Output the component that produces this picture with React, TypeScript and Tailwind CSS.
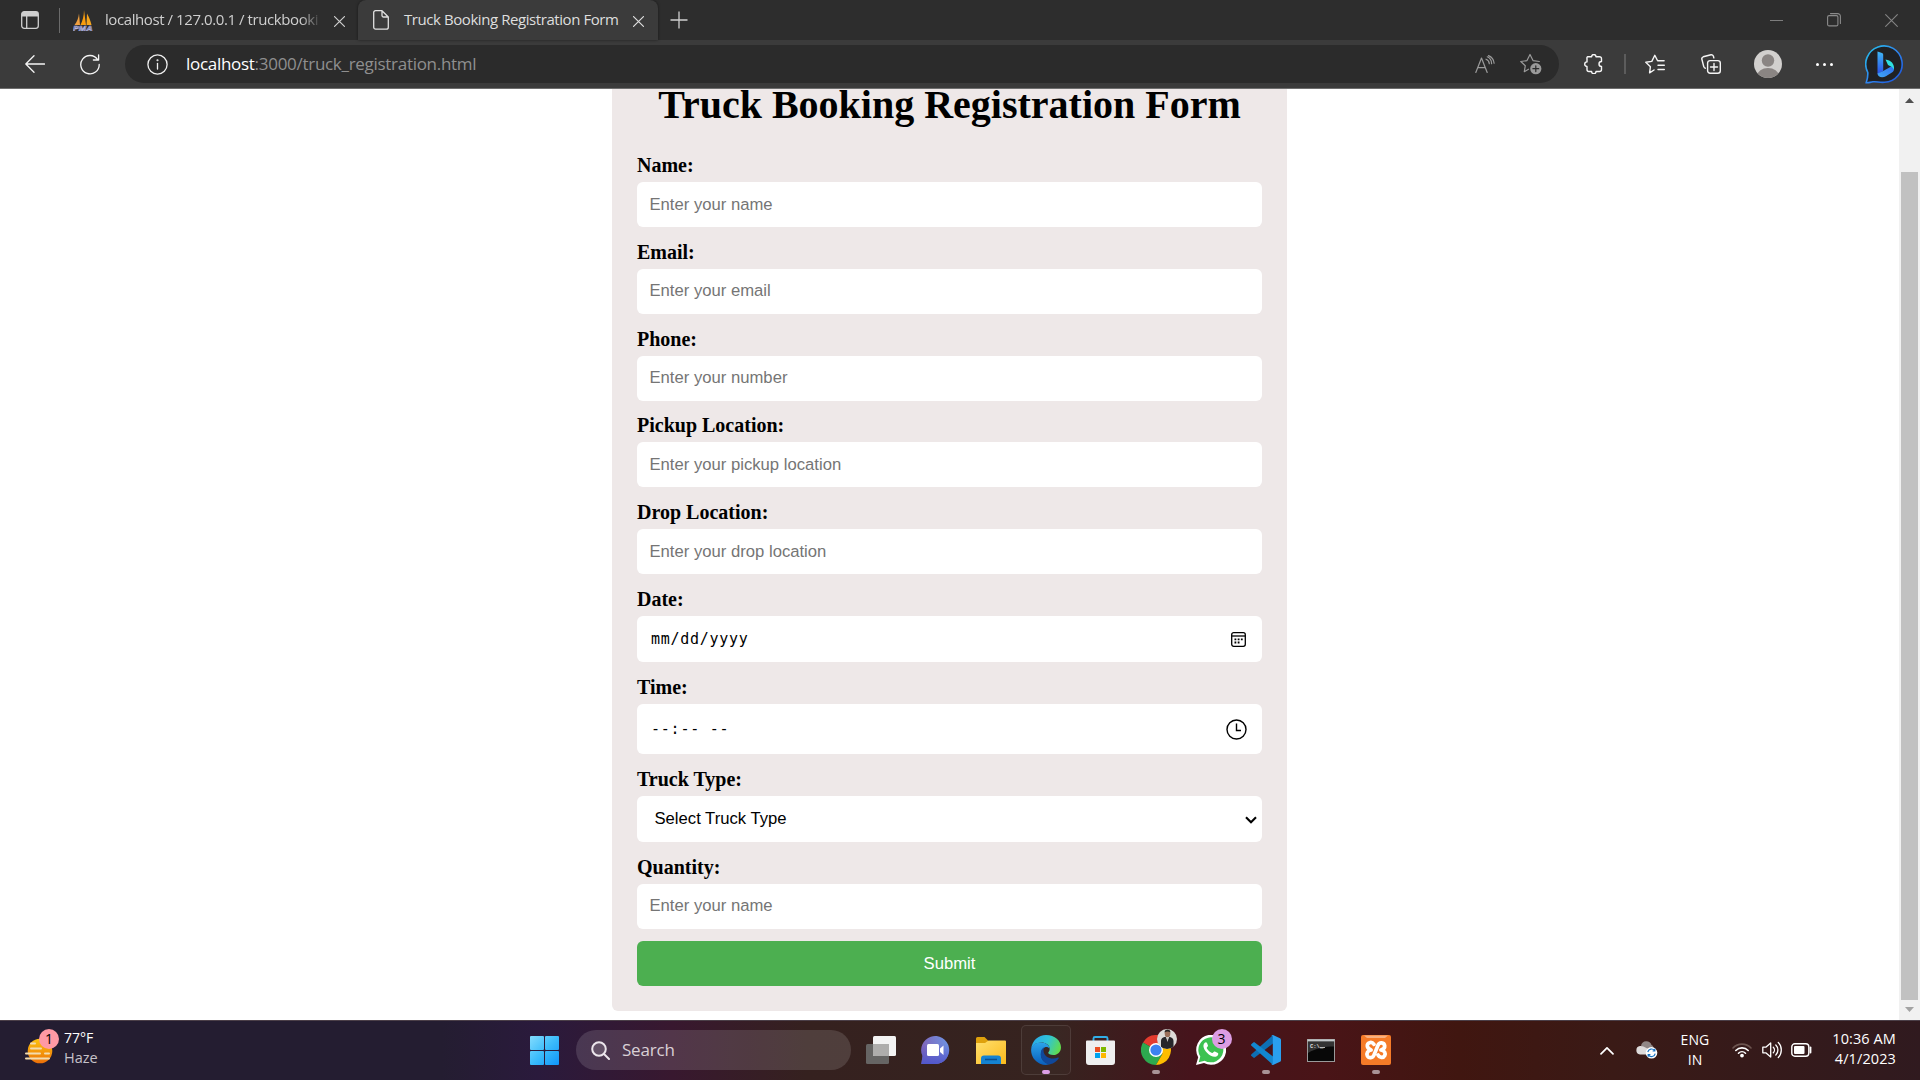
import React from "react";

const stroke = { fill: "none", strokeLinecap: "round" as const, strokeLinejoin: "round" as const };

function CloseIcon({ size, color, width }: { size: number; color: string; width: number }) {
  return (
    <svg width={size} height={size} viewBox="0 0 12 12" {...stroke} stroke={color} strokeWidth={width}>
      <path d="M.6.6l10.8 10.8M11.4.6L.6 11.4" />
    </svg>
  );
}

function TabStrip() {
  return (
    <div className="flex h-10 w-full items-center bg-[#2d2d2d] text-[#cfcfcf]">
      <div className="flex w-[59px] justify-center">
        <svg width="18" height="18" viewBox="0 0 18 18" fill="none">
          <rect x="0.7" y="0.7" width="16.6" height="16.6" rx="2.5" stroke="#cfcfcf" strokeWidth="1.3" />
          <path d="M.7 5.5V3A2.3 2.3 0 0 1 3 .7h12A2.3 2.3 0 0 1 17.300 3v2.500z" fill="#cfcfcf" />
          <path d="M5.700 5v12.500" stroke="#cfcfcf" strokeWidth="1.300" />
        </svg>
      </div>
      <div className="h-[25px] w-px bg-[#6b6b6b]" />
      <div className="flex w-[298px] items-center pl-[13px]">
        <svg width="20" height="21" viewBox="0 0 20 21" className="shrink-0">
          <path d="M1.500 15C4 12 5.500 8 6 3.500L7 15z" fill="#f0a040" />
          <path d="M7.500 15C9.500 11 11 6 11 0l2 15z" fill="#f89c0e" />
          <path d="M13.500 15L14 3.500C16 7 17.500 11 18.500 15z" fill="#f6a51c" />
          <text x="0" y="20.500" fontFamily="Liberation Sans" fontWeight="700" fontStyle="italic" fontSize="8" textLength="19.500" lengthAdjust="spacingAndGlyphs" stroke="#b4b6dc" strokeWidth=".6" fill="#3c3f86">PMA</text>
        </svg>
        <div className="-mt-0.5 ml-3 w-[217px] overflow-hidden text-[15px] leading-5 tracking-[-0.42px] whitespace-nowrap [mask-image:linear-gradient(to_right,black_90%,transparent)]">
          localhost / 127.0.0.1 / truckbooki
        </div>
        <div className="ml-3 mt-0.5 flex">
          <CloseIcon size={11} color="#cfcfcf" width={1.3} />
        </div>
      </div>
      <div className="relative flex h-full w-[300px] items-center rounded-t-[8px] bg-[#3b3b3b] pl-[15px] text-[#dedede] shadow-[0_0_3px_rgba(0,0,0,0.5)]">
        <svg width="16" height="20" viewBox="0 0 16 20" {...stroke} stroke="#e0e0e0" strokeWidth="1.300" className="shrink-0">
          <path d="M2.500.7H9l6.300 6.300v10.200a2 2 0 0 1-2 2H2.700a2 2 0 0 1-2-2V2.500A1.800 1.800 0 0 1 2.500.7zM9 .9V5.500A1.500 1.500 0 0 0 10.500 7h4.600" />
        </svg>
        <div className="-mt-0.5 ml-[15px] w-[214px] text-[15px] leading-5 tracking-[-0.43px] whitespace-nowrap">
          Truck Booking Registration Form
        </div>
        <div className="ml-[15px] mt-0.5 flex">
          <CloseIcon size={11} color="#dedede" width={1.3} />
        </div>
      </div>
      <div className="flex w-[42px] justify-center">
        <svg width="18" height="18" viewBox="0 0 18 18" stroke="#cfcfcf" strokeWidth="1.300">
          <path d="M9 .5v17M.5 9h17" />
        </svg>
      </div>
      <div className="ml-auto flex items-center">
        <div className="flex w-14 justify-center">
          <div className="mr-1 h-px w-[13px] bg-[#7d7d7d]" />
        </div>
        <div className="flex w-14 justify-center">
          <svg width="14" height="14" viewBox="0 0 14 14" {...stroke} stroke="#8a8a8a" strokeWidth="1.100">
            <rect x=".6" y="2.600" width="10.300" height="10.300" rx="1.500" />
            <path d="M3.500.6h7A2.800 2.800 0 0 1 13.400 3.500v7" />
          </svg>
        </div>
        <div className="flex w-[58px] justify-center">
          <CloseIcon size={13} color="#858585" width={1} />
        </div>
      </div>
    </div>
  );
}

function Toolbar() {
  return (
    <div className="flex h-12 w-full items-center bg-[#3b3b3b]">
      <div className="flex w-[70px] justify-center">
        <svg width="20" height="18" viewBox="0 0 20 18" {...stroke} stroke="#f5f5f5" strokeWidth="1.300">
          <path d="M19.500 9H.8M9 .8L.8 9 9 17.200" />
        </svg>
      </div>
      <div className="flex w-10 justify-center">
        <svg width="20" height="21" viewBox="0 0 20 21" {...stroke} stroke="#f5f5f5" strokeWidth="1.300">
          <path d="M17.600 5.500A9.200 9.200 0 1 0 19.200 10.500M18.600.8v5.200h-5.200" />
        </svg>
      </div>
      <div className="ml-[15px] flex h-[38px] w-[1434px] items-center rounded-full bg-[#2b2b2b] pl-[22px]">
        <svg width="21" height="21" viewBox="0 0 21 21" {...stroke} stroke="#f0f0f0" strokeWidth="1.300">
          <circle cx="10.500" cy="10.500" r="9.600" />
          <path d="M10.500 9.500v5.500" />
          <circle cx="10.500" cy="6.300" r=".4" fill="#f0f0f0" />
        </svg>
        <div className="ml-[18px] text-[17px] leading-6 tracking-[-0.29px] text-[#8f8f8f]">
          <span className="text-white">localhost</span>:3000/truck_registration.html
        </div>
        <svg width="20" height="19" viewBox="0 0 20 19" {...stroke} stroke="#9a9a9a" strokeWidth="1.200" className="ml-auto">
          <path d="M.8 17.500L6.500 3l5.700 14.500M2.800 12.700h7.500M11 4.200a5 5 0 0 1 3.300 4.500M12.300 1.800a7.500 7.500 0 0 1 4.300 6.900M13.500.600a9 9 0 0 1 5.600 7.600" />
        </svg>
        <svg width="22" height="22" viewBox="0 0 22 22" {...stroke} stroke="#9a9a9a" strokeWidth="1.200" className="mr-[17px] ml-[25px]">
          <path d="M8.500 16.200L4.300 18.700 5.300 12.700.8 8.500l6.200-.9L10 1.500l3 6.100 6.300.900" />
          <circle cx="15.800" cy="15.700" r="5.600" fill="#9a9a9a" stroke="none" />
          <path d="M15.800 12.800v5.800M12.900 15.700h5.800" stroke="#2b2b2b" />
        </svg>
      </div>
      <div className="flex w-[65px] justify-center pl-1">
        <svg width="19" height="20" viewBox="0 0 19 20" {...stroke} stroke="#f5f5f5" strokeWidth="1.400">
          <path d="M3.500 2.700H7.600A2.200 2.200 0 0 1 12 2.700h3.500a2 2 0 0 1 2 2v2.800a2.300 2.300 0 0 0 0 5v3a2 2 0 0 1-2 2H12a2.200 2.200 0 0 1-4.400 0H5a2 2 0 0 1-2-2v-3a2.300 2.300 0 0 1 0-4.600V4.700a2 2 0 0 1 .5-2z" />
        </svg>
      </div>
      <div className="h-5 w-0.5 bg-[#5c5c5c]" />
      <div className="flex w-[58px] justify-center">
        <svg width="20" height="20" viewBox="0 0 20 20" {...stroke} stroke="#f5f5f5" strokeWidth="1.400">
          <path d="M9 16L4.600 18.800 5.400 12.700.8 8.300l6-.9L9.800 1.300l2.800 5.500h6.500M13 11.300h6.300M13 15.500h6.300" />
        </svg>
      </div>
      <div className="flex w-[53px] justify-center">
        <svg width="20" height="20" viewBox="0 0 20 20" {...stroke} stroke="#f5f5f5" strokeWidth="1.400">
          <path d="M4.300 14.200a2 2 0 0 1-1.500-1.500L.8 5A2 2 0 0 1 2.200 2.800L10 .8a2 2 0 0 1 2.400 1.500l.4 1.500" />
          <rect x="6.600" y="6.600" width="12.700" height="12.700" rx="2.500" />
          <path d="M13 9.500v7M9.500 13h7" />
        </svg>
      </div>
      <div className="flex w-[61px] justify-center">
        <svg width="28" height="28" viewBox="0 0 28 28">
          <defs>
            <clipPath id="avatarClip"><circle cx="14" cy="14" r="14" /></clipPath>
          </defs>
          <g clipPath="url(#avatarClip)">
            <rect width="28" height="28" fill="#d2d0ce" />
            <circle cx="14" cy="10.500" r="6.200" fill="#8a8583" />
            <ellipse cx="14" cy="25.500" rx="10.700" ry="7.500" fill="#8a8583" />
          </g>
        </svg>
      </div>
      <div className="flex w-[53px] justify-center gap-1">
        <div className="size-[3px] rounded-full bg-white" />
        <div className="size-[3px] rounded-full bg-white" />
        <div className="size-[3px] rounded-full bg-white" />
      </div>
      <svg width="39" height="39" viewBox="0 0 39 39" className="ml-[14px]">
        <defs>
          <linearGradient id="bingRing" x1="0" y1="0" x2="1" y2="1">
            <stop offset="0" stopColor="#25c4e8" />
            <stop offset=".5" stopColor="#2f86f0" />
            <stop offset="1" stopColor="#1a4fd8" />
          </linearGradient>
          <linearGradient id="bingStem" x1="0" y1="0" x2="0" y2="1">
            <stop offset="0" stopColor="#3fb8f5" />
            <stop offset="1" stopColor="#2b50e8" />
          </linearGradient>
          <linearGradient id="bingFoot" x1="0" y1="1" x2="1" y2="0">
            <stop offset="0" stopColor="#40a8f5" />
            <stop offset="1" stopColor="#2f6cf0" />
          </linearGradient>
        </defs>
        <path d="M1.200 37.700C2.600 34 3 31.500 2.800 27.500A18.200 18.200 0 1 1 19.500 37.300C14 37.800 12 36.200 8 36.800 5 37.200 3 38.200 1.200 37.700z" fill="#202124" stroke="url(#bingRing)" strokeWidth="1.600" />
        <path d="M12.500 6.500l4.500 1.600c.8.300 1.200 1 1.200 1.800v16l-5.700 3z" fill="url(#bingStem)" />
        <path d="M12.500 28.500l5.700-2.500 9.700-5.600c1.800 2.500 1.500 5.600-1 7.200l-6 3.700c-4 2.300-8.400.5-8.400-2.800z" fill="url(#bingFoot)" />
        <path d="M20.500 14.500c5.500.8 9 4.200 8.500 10-1.200-2.300-3.200-3.300-6-4.500z" fill="#2fe0e0" />
      </svg>
    </div>
  );
}

const inputBase =
  "block w-[625px] rounded-[6px] border-0 bg-white pr-[13px] pl-[12.5px] font-['Liberation_Sans',Arial,sans-serif] text-[16.67px] outline-none";

function Field({ label, className, children }: { label: string; className: string; children: React.ReactNode }) {
  return (
    <div className={`flex flex-col justify-end ${className}`}>
      <label className="mb-[5.5px] block text-[20px] leading-[23px] font-bold">{label}</label>
      {children}
    </div>
  );
}

function TextInput({ placeholder, raised }: { placeholder: string; raised?: boolean }) {
  return (
    <input
      type="text"
      placeholder={placeholder}
      className={`${inputBase} h-[45px] shrink-0 placeholder:text-[#757575] placeholder:opacity-100 ${raised ? "pb-0.5" : ""}`}
    />
  );
}

function BookingForm() {
  return (
    <form className="-mt-[32px] flex h-[954px] w-[675px] flex-col rounded-[6px] bg-[#eee8e8] px-[25px] pt-[25px] font-['Liberation_Serif','Times_New_Roman',serif] text-black">
      <h1 className="h-[46px] text-center text-[40px] leading-[46px] font-bold whitespace-nowrap">
        Truck Booking Registration Form
      </h1>
      <Field label="Name:" className="h-[99px]"><TextInput placeholder="Enter your name" /></Field>
      <Field label="Email:" className="h-[87px]"><TextInput placeholder="Enter your email" raised /></Field>
      <Field label="Phone:" className="h-[87px]"><TextInput placeholder="Enter your number" raised /></Field>
      <Field label="Pickup Location:" className="h-[86px]"><TextInput placeholder="Enter your pickup location" /></Field>
      <Field label="Drop Location:" className="h-[87px]"><TextInput placeholder="Enter your drop location" /></Field>
      <Field label="Date:" className="h-[88px]">
        <div className="flex h-[46px] items-center justify-between rounded-[6px] bg-white pr-[16px] pl-[14px] font-['DejaVu_Sans_Mono',monospace] text-[15px] tracking-[0.72px]">
          <span>mm/dd/yyyy</span>
          <svg width="15" height="15" viewBox="0 0 15 15" fill="none" stroke="#000" strokeWidth="1.300">
            <rect x=".7" y=".7" width="13.600" height="13.600" rx="2" />
            <path d="M.7 4h13.600" />
            <path d="M3.500 7.300h8.500M3.500 10.500h5.500" strokeWidth="1.800" strokeDasharray="1.800 1.400" />
          </svg>
        </div>
      </Field>
      <Field label="Time:" className="h-[92px]">
        <div className="flex h-[50px] items-center justify-between rounded-[6px] bg-white pr-[15px] pl-[14px] font-['DejaVu_Sans_Mono',monospace] text-[15px] tracking-[0.77px]">
          <span className="whitespace-pre">--:-- --</span>
          <svg width="21" height="21" viewBox="0 0 21 21" fill="none" stroke="#000" strokeWidth="1.400">
            <circle cx="10.500" cy="10.500" r="9.500" />
            <path d="M10.500 4.500v7h4.500" />
          </svg>
        </div>
      </Field>
      <Field label="Truck Type:" className="h-[88px]">
        <div className="flex h-[46px] items-center justify-between rounded-[6px] bg-white pr-[5px] pl-[17.5px] font-['Liberation_Sans',Arial,sans-serif] text-[16.67px]">
          <span className="-mt-px">Select Truck Type</span>
          <svg width="12" height="8" viewBox="0 0 12 8" fill="none" stroke="#000" strokeWidth="2.100" className="mt-0.5">
            <path d="M1 1.200l5 5 5-5" />
          </svg>
        </div>
      </Field>
      <Field label="Quantity:" className="h-[87px]"><TextInput placeholder="Enter your name" raised /></Field>
      <button type="button" className="mt-3 h-[45px] rounded-[6px] bg-[#4caf50] font-['Liberation_Sans',Arial,sans-serif] text-[16.67px] text-white">
        Submit
      </button>
    </form>
  );
}

function Viewport() {
  return (
    <div className="flex h-[931px] w-full bg-white">
      <div className="flex h-full w-[1899px] items-start justify-center overflow-hidden">
        <BookingForm />
      </div>
      <div className="flex h-full w-[21px] flex-col items-center bg-[#f1f1f1]">
        <svg width="9" height="5" viewBox="0 0 9 5" className="mt-[9px]"><path d="M4.500 0L9 5H0z" fill="#505050" /></svg>
        <div className="mt-[69px] h-[828px] w-[17px] bg-[#c1c1c1]" />
        <svg width="9" height="5" viewBox="0 0 9 5" className="mt-[7px]"><path d="M4.500 5L9 0H0z" fill="#a3a3a3" /></svg>
      </div>
    </div>
  );
}

function AppCell({ children, active, running }: { children: React.ReactNode; active?: boolean; running?: boolean }) {
  return (
    <div className="flex h-full w-[55px] items-center justify-center">
      <div
        className={
          active
            ? "relative flex size-[50px] items-center justify-center rounded-[5px] bg-white/[0.02] ring-1 ring-white/10 ring-inset"
            : "relative flex size-[50px] items-center justify-center"
        }
      >
        {children}
        {active && <div className="absolute bottom-[1px] h-1 w-2 rounded-full bg-[#dc9fe6]" />}
        {running && <div className="absolute bottom-[1px] h-1 w-2 rounded-full bg-[#a99396]" />}
      </div>
    </div>
  );
}

function PinnedApps() {
  return (
    <>
      <AppCell>
        <svg width="30" height="28" viewBox="0 0 30 28">
          <rect x="0" y="8" width="23" height="20" rx="1.500" fill="#666564" />
          <rect x="7" y="0" width="23" height="20" rx="1.500" fill="#f3f3f3" />
          <path d="M7 8h16v12H8.500A1.500 1.500 0 0 1 7 18.500z" fill="#aeadac" />
        </svg>
      </AppCell>
      <AppCell>
        <svg width="29" height="28" viewBox="0 0 29 28">
          <defs>
            <linearGradient id="chatFill" x1="0" y1=".3" x2="1" y2="0"><stop offset="0" stopColor="#8064b8" /><stop offset="1" stopColor="#6c97e6" /></linearGradient>
            <linearGradient id="chatShade" x1="0" y1="0" x2="0" y2="1"><stop offset=".3" stopColor="#5258cf" stopOpacity="0" /><stop offset="1" stopColor="#5058cc" /></linearGradient>
          </defs>
          <path d="M.3 28L1.500 20A14 14 0 1 1 15 28z" fill="url(#chatFill)" />
          <path d="M.3 28L1.500 20A14 14 0 1 1 15 28z" fill="url(#chatShade)" />
          <rect x="6" y="8" width="12" height="12" rx="1.500" fill="#fff" />
          <path d="M19 12.500l3.500-3v9.500L19 16z" fill="#fff" />
        </svg>
      </AppCell>
      <AppCell>
        <svg width="30" height="27" viewBox="0 0 30 27">
          <defs><linearGradient id="folderFill" x1="0" y1="0" x2="1" y2="1"><stop offset="0" stopColor="#ffdf6e" /><stop offset="1" stopColor="#fbbb1c" /></linearGradient></defs>
          <path d="M0 1.500A1.500 1.500 0 0 1 1.500 0H8.500l4 4H29v6H0z" fill="#dfa10c" />
          <path d="M0 6h9l3.500-2.500H29A1 1 0 0 1 30 4.500V27H0z" fill="url(#folderFill)" />
          <path d="M5 27v-5.500a3 3 0 0 1 3-3H22a3 3 0 0 1 3 3V27z" fill="#1583d2" />
          <path d="M9 22.500h12" stroke="#0b4f8e" strokeWidth="1.500" />
        </svg>
      </AppCell>
      <AppCell active>
        <svg width="30" height="30" viewBox="0 0 30 30">
          <defs>
            <linearGradient id="edgeTop" x1="0" y1=".3" x2="1" y2=".6"><stop offset="0" stopColor="#2aa9e8" /><stop offset=".5" stopColor="#2fc3d8" /><stop offset="1" stopColor="#62dc4a" /></linearGradient>
            <linearGradient id="edgeSide" x1="0" y1="0" x2="0" y2="1"><stop offset="0" stopColor="#2ba4ea" /><stop offset="1" stopColor="#0a5fbc" /></linearGradient>
          </defs>
          <path d="M.2 14C1 5.500 7.500 0 15 0c9 0 15 6 15 12.200 0 4.800-3.500 7.800-7.600 7.800-3.500 0-5.200-1.200-5.200-2.200 0-.8 1.500-1.200 1.500-4C18.700 10 14.500 7.600 10.500 7.600 4 7.600.7 11.500.2 14z" fill="url(#edgeTop)" />
          <path d="M.2 14C.9 10 5 7.300 10.500 7.600c4.500.2 8 3 8.200 6-1.200-1.500-3.200-2-4.700-1.400-3 1.300-4.500 4.800-4 8.300.6 4.500 4 8 9.500 8.600C16.500 30.300 12.500 30.200 9 28.700 3 26.200-.4 20 .2 14z" fill="url(#edgeSide)" />
          <path d="M10 16.500c-1.500 7 3 12.500 9 12.700 4-.8 7-3 8.800-6 .2-.6-.3-.9-.9-.6-5.400 2.500-13.900.2-14.400-6.600-.1-1.500.4-3 1.300-3.900-2 .8-3.400 2.500-3.800 4.400z" fill="#10489a" />
        </svg>
      </AppCell>
      <AppCell>
        <svg width="29" height="29" viewBox="0 0 29 29">
          <path d="M7.500 6V2.500A1.500 1.500 0 0 1 9 1h11a1.500 1.500 0 0 1 1.500 1.500V6" fill="none" stroke="#31aee8" strokeWidth="1.900" />
          <path d="M0 5.500A1 1 0 0 1 1 4.500H28a1 1 0 0 1 1 1V26a3 3 0 0 1-3 3H3a3 3 0 0 1-3-3z" fill="#efefef" />
          <rect x="9" y="11" width="5" height="5" fill="#ea4f22" /><rect x="15" y="11" width="5" height="5" fill="#7eb900" />
          <rect x="9" y="17" width="5" height="5" fill="#00a3ee" /><rect x="15" y="17" width="5" height="5" fill="#fdb801" />
        </svg>
      </AppCell>
      <AppCell running>
        <svg width="30" height="30" viewBox="0 0 30 30">
          <path d="M15 15L2 7.500A15 15 0 0 1 28 7.500z" fill="#e33b2e" />
          <path d="M15 15L2 7.500A15 15 0 0 0 15 30l6.500-11.200z" fill="#2da94f" />
          <path d="M15 8.500H28.500A15 15 0 0 1 15 30l6.500-11.200z" fill="#fdbd00" />
          <circle cx="15" cy="15" r="7" fill="#fff" /><circle cx="15" cy="15" r="5.600" fill="#3c82f0" />
        </svg>
        <svg width="20" height="20" viewBox="0 0 20 20" className="absolute top-[4px] right-[4px]">
          <defs><clipPath id="profileClip"><circle cx="10" cy="10" r="10" /></clipPath></defs>
          <g clipPath="url(#profileClip)">
            <rect width="20" height="20" fill="#dcdbd8" />
            <ellipse cx="10.500" cy="4.500" rx="2.800" ry="3.800" fill="#9a6f5a" />
            <path d="M7.500 3.500C7.500-.5 13.500-.5 13.500 3.500 12 2 9 2 7.500 3.500z" fill="#222" />
            <path d="M4 20V12c0-2.500 2-3.700 4.500-4.200l2 3 2-3C15 8.500 16.500 10 16.500 12v8z" fill="#26262a" />
            <path d="M9 8l1.500 5L12 8z" fill="#c9c5c2" />
          </g>
        </svg>
      </AppCell>
      <AppCell>
        <svg width="30" height="30" viewBox="0 0 30 30">
          <path d="M0 30L2.200 22.200A15 15 0 1 1 8 27.900z" fill="#fff" />
          <path d="M2.700 27.300L4.300 21.600A12.500 12.500 0 1 1 8.600 25.700z" fill="#3cc251" />
          <path d="M11 8c-.5-1-1.500-1-2.200-.3C6 10.500 8 14.500 11 17.800c3.500 3.700 8.500 5.500 10.700 2.700.7-1 .8-2 .2-2.400l-3-1.600c-.6-.3-1 0-1.300.5-.8 1-1.200 1.200-2 .8-2-1-3.600-2.500-4.700-4.400-.4-.8.100-1.200.8-2 .3-.4.400-.8.200-1.200z" fill="#fff" />
        </svg>
        <div className="absolute top-[4px] right-[4px] flex size-5 items-center justify-center rounded-full bg-[#dc9de4] text-[14px] leading-none text-black">3</div>
      </AppCell>
      <AppCell running>
        <svg width="30" height="30" viewBox="0 0 30 30">
          <path d="M22 0v8.500L3.800 22.600a1.200 1.200 0 0 1-1.500 0L.5 21a1.200 1.200 0 0 1 0-1.800z" fill="#0d6fb5" />
          <path d="M22 30v-8.500L3.800 7.400a1.200 1.200 0 0 0-1.500 0L.5 9a1.200 1.200 0 0 0 0 1.800z" fill="#1287cf" />
          <path d="M22 0l7 3.200a1.800 1.800 0 0 1 1 1.600v20.400a1.800 1.800 0 0 1-1 1.600L22 30c-.8.200-1.500-.2-2-.7 1 .6 1.800 0 1.800-1V1.800c0-1.100-.9-1.600-1.800-1 .5-.6 1.200-1 2-.8z" fill="#2a9fee" />
        </svg>
      </AppCell>
      <AppCell>
        <svg width="28" height="23" viewBox="0 0 28 23">
          <rect x=".5" y=".5" width="27" height="22" fill="#080808" stroke="#9a9a9a" />
          <path d="M1 3h26v4.500C18 7.500 9 9 1 14z" fill="#333" />
          <path d="M.5 1.500h27" stroke="#c4c8ca" strokeWidth="2" />
          <text x="3" y="8.800" fontSize="5.500" fontFamily="Liberation Mono" fontWeight="700" fill="#e0e0e0">C:\_</text>
          <path d="M13 8.500h5" stroke="#ddd" strokeWidth=".8" />
        </svg>
      </AppCell>
      <AppCell running>
        <svg width="30" height="30" viewBox="0 0 30 30" {...stroke}>
          <rect width="30" height="30" rx="2" fill="#f57b28" />
          <path d="M3 .5h24l-3 2.500H6z" fill="#f8b080" />
          <path d="M13 9.300C10.500 6 6 7.700 6.300 11c.2 2.200 2 3.300 3.800 4C6.500 15.700 5.300 18.300 6.300 20.700c1.400 2.900 5.600 2.400 6.700-.7l4-9.700C18.400 6.700 23.200 7.300 23.700 10.800c.2 2.200-1.600 3.600-3.800 4.200 3.900.6 4.900 3.400 3.800 5.700-1.400 2.700-5.200 2-6.700-.7" stroke="#fff" strokeWidth="3.700" />
        </svg>
      </AppCell>
    </>
  );
}

function Tray() {
  return (
    <div className="ml-auto flex h-full items-center text-[14px] leading-5 text-white">
      <div className="flex w-10 justify-center">
        <svg width="14" height="9" viewBox="0 0 14 9" {...stroke} stroke="#fff" strokeWidth="1.700"><path d="M1 7.800l6-6 6 6" /></svg>
      </div>
      <div className="flex w-10 justify-center">
        <svg width="22" height="18" viewBox="0 0 22 18">
          <path d="M5 4.500A5.500 5.500 0 0 1 15.500 4c2 .8 2.500 3 1.500 5l-7 2z" fill="#918786" />
          <path d="M4 13.500A4.300 4.300 0 0 1 4 5c4-.5 6.500 2.500 9 3.500v5z" fill="#dedbdb" />
          <circle cx="15.500" cy="11.800" r="5.800" fill="#fff" />
          <path d="M11.800 11a3.800 3.800 0 0 1 6.800-1.400M19.200 12.600a3.800 3.800 0 0 1-6.800 1.400M18.800 7.800v2.200h-2.200M12.200 15.800v-2.200h2.200" fill="none" stroke="#1673c4" strokeWidth="1.200" />
        </svg>
      </div>
      <div className="-mt-px w-14 text-center tracking-[0.1px]">ENG<br />IN</div>
      <div className="flex w-[38px] justify-center">
        <svg width="20" height="16" viewBox="0 0 20 16" {...stroke} strokeWidth="1.600" stroke="#fff">
          <path d="M1 6a12.500 12.500 0 0 1 18 0" stroke="#6d5550" />
          <path d="M3.800 8.500a8.700 8.700 0 0 1 12.400 0M6.500 11.200a5 5 0 0 1 7 0" />
          <circle cx="10" cy="13.600" r="1.100" fill="#fff" />
        </svg>
      </div>
      <div className="flex w-[22px] justify-center">
        <svg width="20" height="18" viewBox="0 0 20 18" {...stroke} strokeWidth="1.300" stroke="#fff">
          <path d="M.8 6.200h3L8.700 2v14L3.800 11.800h-3zM11.300 6.200a4 4 0 0 1 0 5.600M13.800 4a7 7 0 0 1 0 10M16.300 1.500c4 4 4 11 0 15" />
        </svg>
      </div>
      <div className="flex w-9 justify-center">
        <svg width="21" height="14" viewBox="0 0 21 14" fill="none">
          <rect x=".8" y=".8" width="17" height="12.400" rx="3" stroke="#fff" strokeWidth="1.400" />
          <rect x="3" y="3" width="10.500" height="8" rx="1" fill="#fff" />
          <path d="M19.500 4.500v5" stroke="#fff" strokeWidth="1.800" strokeLinecap="round" />
        </svg>
      </div>
      <div className="-mt-0.5 w-[101px] pr-[24px] text-right text-[14.5px] tracking-[0.1px] whitespace-nowrap">10:36 AM<br />4/1/2023</div>
    </div>
  );
}

function Taskbar() {
  return (
    <div className="flex h-[60px] w-full items-center bg-[linear-gradient(90deg,#241d31_0%,#241d31_23%,#2a1a3c_28%,#38182f_35%,#35211f_42%,#36231f_55%,#46141c_62%,#491417_69%,#401610_76%,#3a1a16_84%,#301a1f_100%)] shadow-[inset_0_1px_0_#4b3f48]">
      <div className="flex w-[517px] items-center pl-[25px] text-[14px] leading-5">
        <div className="relative h-[36px] w-[36px]">
          <svg width="28" height="26" viewBox="0 0 28 26" className="absolute top-[6px] left-0">
            <defs><linearGradient id="sunFill" x1="0" y1="0" x2="0" y2="1"><stop offset="0" stopColor="#fcc40e" /><stop offset="1" stopColor="#ec7009" /></linearGradient></defs>
            <circle cx="15" cy="13" r="12.300" fill="url(#sunFill)" />
            <path d="M6 5.500h4M6 10.500h10M1 15.500h14M20 15.500h4M1 20.500h23" stroke="#f3dcae" strokeWidth="2" strokeLinecap="round" />
          </svg>
          <div className="absolute -top-[3px] left-[14px] flex size-5 items-center justify-center rounded-full bg-[#ff99a4] text-[14px] leading-none text-black">1</div>
        </div>
        <div className="-mt-1 ml-[3px] text-white">
          77°F
          <div className="text-[14.5px] text-[#c6c2c9]">Haze</div>
        </div>
      </div>
      <div className="flex w-[55px] justify-center">
        <svg width="29" height="29" viewBox="0 0 29 29">
          <defs><linearGradient id="startFill" gradientUnits="userSpaceOnUse" x1="0" y1="0" x2="29" y2="29"><stop offset="0" stopColor="#83dcfe" /><stop offset=".5" stopColor="#3cbcfb" /><stop offset="1" stopColor="#0f94fa" /></linearGradient></defs>
          <g fill="url(#startFill)">
            <rect width="14" height="14" rx="1" /><rect x="15" width="14" height="14" rx="1" />
            <rect y="15" width="14" height="14" rx="1" /><rect x="15" y="15" width="14" height="14" rx="1" />
          </g>
        </svg>
      </div>
      <div className="ml-1 flex h-10 w-[275px] items-center rounded-full bg-white/[0.13] pl-[15px]">
        <svg width="19" height="19" viewBox="0 0 19 19" {...stroke} stroke="#ece6ec" strokeWidth="2">
          <circle cx="8" cy="8" r="6.800" fill="#ffffff22" /><path d="M13 13l5 5" />
        </svg>
        <div className="ml-3 text-[17px] leading-6 tracking-[-0.2px] text-[#d9d0d6]">Search</div>
      </div>
      <div className="ml-0.5 flex h-full items-center"><PinnedApps /></div>
      <Tray />
    </div>
  );
}

export default function App() {
  return (
    <div className="flex h-[1080px] w-[1920px] flex-col overflow-hidden bg-white font-['Open_Sans','Noto_Sans',sans-serif]">
      <TabStrip />
      <Toolbar />
      <div className="h-px w-full bg-[#6e6e6e]" />
      <Viewport />
      <Taskbar />
    </div>
  );
}
